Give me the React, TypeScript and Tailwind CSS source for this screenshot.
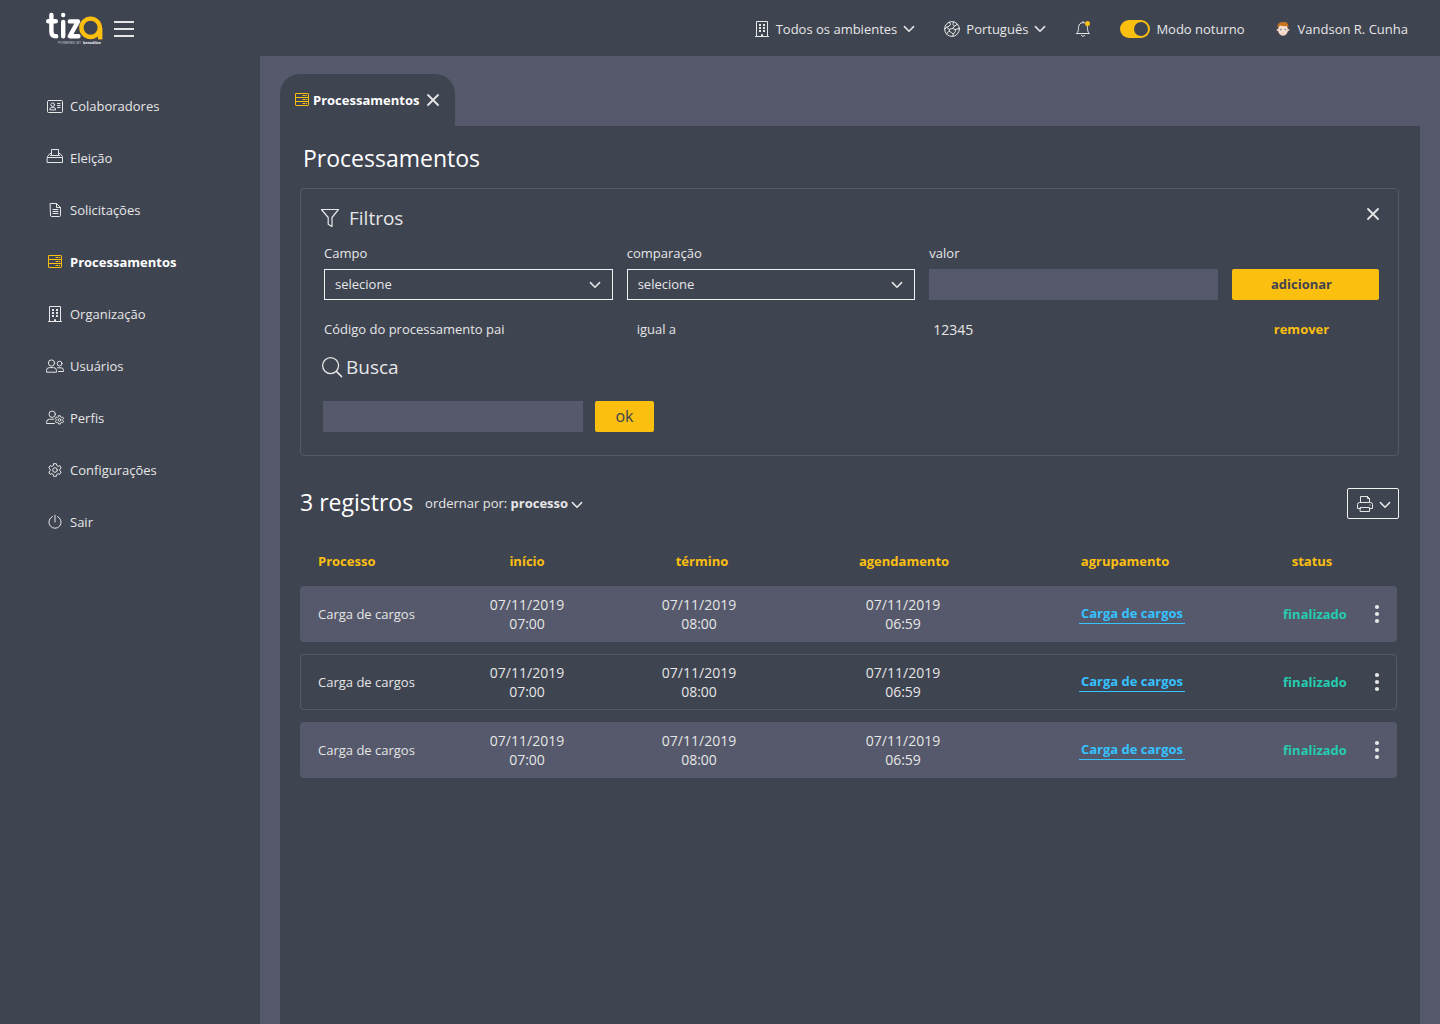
import type { ReactNode } from "react";

type IconProps = { className?: string };

function Svg({ w, h, className = "", children }: { w: number; h: number; className?: string; children: ReactNode }) {
  return (
    <svg
      width={w}
      height={h}
      viewBox={`0 0 ${w} ${h}`}
      fill="none"
      stroke="currentColor"
      strokeWidth="1"
      strokeLinecap="round"
      strokeLinejoin="round"
      aria-hidden="true"
      className={`shrink-0 ${className}`}
    >
      {children}
    </svg>
  );
}

function Logo() {
  return (
    <svg width="58" height="34" viewBox="0 0 58 34" role="img" aria-label="tiza, powered by bencalize" className="shrink-0">
      <g fill="none" stroke="#ffffff" strokeWidth="4.4" strokeLinecap="round" strokeLinejoin="round">
        <path d="M6.4 3V19.5Q6.4 24.3 11.2 24.3M3.2 9.2H10.8" />
        <path d="M18.2 10V24.3M18.2 3V3.1" />
        <path d="M24.8 9.4H33L24.8 24.2H33.4" />
      </g>
      <circle cx="45.6" cy="15.8" r="9.2" fill="#3f4451" stroke="#fbbf10" strokeWidth="4.4" />
      <path d="M55.2 15.8V27.4" stroke="#fbbf10" strokeWidth="4.4" fill="none" />
      <text x="36" y="31.6" textAnchor="end" fontSize="3.4" fill="#c9cbd1" fontFamily="Liberation Sans">POWERED BY</text>
      <text x="38" y="31.6" fontSize="4" fontWeight="700" fill="#ffffff" fontFamily="Liberation Sans">bencàlize</text>
    </svg>
  );
}

const Chevron = ({ className }: IconProps) => (
  <Svg w={12} h={8} className={className}>
    <path d="M1.4 1.6L6 6.2L10.6 1.6" strokeWidth="1.5" />
  </Svg>
);

const Close = ({ className }: IconProps) => (
  <Svg w={14} h={14} className={className}>
    <path d="M2 2L12 12M12 2L2 12" strokeWidth="1.8" />
  </Svg>
);

const Building = () => (
  <Svg w={16} h={16}>
    <path d="M2.5 15V.5H13.5V15M1.5 15.5H14.5M7.5 15V13.5H8.5V15" strokeLinecap="square" />
    <path d="M5 4H7M9 4H11M5 7H7M9 7H11M5 10H7M9 10H11" strokeWidth="2" strokeLinecap="butt" />
  </Svg>
);

const Globe = () => (
  <Svg w={16} h={16}>
    <circle cx="8" cy="8" r="7.4" />
    <path d="M5.2 1.3L6.6 3.2L5 5.3L2.4 6.2L1 8.2M2.4 6.2L5.4 8.4L5.2 10.2L3.4 11.6L2.8 13M9.6.9L8.8 3.4L10.4 5.2L8.6 7.4L5.4 8.4M10.4 5.2L13.4 3.2M8.6 7.4L11.2 8.6L11.4 10.8L9.2 13L9 15.2M11.2 8.6L15.2 7.4M5.2 10.2L7.4 11.6L9.2 13" />
  </Svg>
);

const Bell = () => (
  <Svg w={16} h={18}>
    <path d="M1.5 13.5H14.5C12.8 12.2 12.6 10.6 12.5 7.6C12.4 4.6 10.7 2.6 8 2.6S3.6 4.6 3.5 7.6C3.4 10.6 3.2 12.2 1.5 13.5ZM6.4 15.6Q8 17.4 9.6 15.6M8 2.4V1.4" />
    <circle cx="12.5" cy="3.4" r="2.5" fill="#fbbf10" stroke="none" />
  </Svg>
);

const Avatar = () => (
  <Svg w={14} h={16}>
    <g stroke="none">
      <ellipse cx="7" cy="8.8" rx="5" ry="5.9" fill="#f7dfcf" />
      <circle cx="1.6" cy="9" r="1.1" fill="#efc4ab" />
      <circle cx="12.4" cy="9" r="1.1" fill="#efc4ab" />
      <path d="M1.8 7.4C.8 3.2 2.8.8 6.4 1.2C9.6.2 13.2 1.6 12.2 7.4L11.2 5C8.6 5.4 6 5 4.2 4.4L2.6 5.6Z" fill="#c8741f" />
      <circle cx="4.8" cy="8.6" r=".8" fill="#5d7f9b" />
      <circle cx="9.2" cy="8.6" r=".8" fill="#5d7f9b" />
      <path d="M5.8 12H8.2L7 12.8Z" fill="#d97f72" />
    </g>
  </Svg>
);

const Card = () => (
  <Svg w={18} h={16}>
    <rect x="1.5" y="2.5" width="15" height="12" rx="1" />
    <circle cx="6.7" cy="6.7" r="1.8" />
    <path d="M3.8 11.5Q3.8 9.4 5.6 9.4H7.8Q9.6 9.4 9.6 11.5ZM11.5 5.5H14M11.5 7.5H14M11.5 9.5H14" />
  </Svg>
);

const Ballot = () => (
  <Svg w={18} h={16} className="-translate-y-0.5">
    <path d="M1.5 9.5H16.5V14.5H1.5ZM1.5 9.5V8.5L4 5.5H5M16.5 9.5V8.5L14 5.5H13M4.5 7.5H13.5M5.5 7V1.5H12.5V7" />
  </Svg>
);

const Doc = () => (
  <Svg w={16} h={16}>
    <path d="M3.5 1.5H9.5L13.5 5.5V13.5Q13.5 14.5 12.5 14.5H4.5Q3.5 14.5 3.5 13.5ZM9.5 1.5V5.5H13.5M6 7.5H11M6 9.5H11M6 11.5H11" />
  </Svg>
);

const Server = () => (
  <Svg w={16} h={14} className="text-[#fbbf10]">
    <rect x="1.5" y=".5" width="13" height="12" rx=".6" />
    <path d="M1.5 4.5H14.5M1.5 8.5H14.5M9 2.5H11M12.4 2.5H12.6M9 6.5H11M12.4 6.5H12.6M9 10.5H11M12.4 10.5H12.6" />
  </Svg>
);

const Users = () => (
  <Svg w={20} h={16}>
    <circle cx="6.5" cy="5" r="3.1" />
    <circle cx="14.6" cy="5.6" r="2.4" />
    <path d="M1.5 13.8V12.6Q1.5 9.6 4.4 9.6H8.6Q11.5 9.6 11.5 12.6V13.8ZM13.5 13.5H18.5V12.4Q18.5 9.8 16 9.8H12.6" />
  </Svg>
);

const gearPath =
  "M6.7 1.7H9.3L9.7 3.5L11.1 4.3L12.9 3.7L14.2 6L12.8 7.2V8.8L14.2 10L12.9 12.3L11.1 11.7L9.7 12.5L9.3 14.3H6.7L6.3 12.5L4.9 11.7L3.1 12.3L1.8 10L3.2 8.8V7.2L1.8 6L3.1 3.7L4.9 4.3L6.3 3.5Z";

const UserGear = () => (
  <Svg w={20} h={16}>
    <circle cx="7.2" cy="4.2" r="3.2" />
    <path d="M9.4 13.5H1.5V12.4Q1.5 9.2 4.6 9.2H8.8" />
    <g transform="translate(9.2 4.6) scale(.66)" strokeWidth="1.5">
      <path d={gearPath} />
      <circle cx="8" cy="8" r="2" />
    </g>
  </Svg>
);

const Gear = () => (
  <Svg w={16} h={16}>
    <path d={gearPath} />
    <circle cx="8" cy="8" r="2.3" />
  </Svg>
);

const Power = () => (
  <Svg w={16} h={16}>
    <path d="M5.4 2.6A6.1 6.1 0 1 0 10.6 2.6M8 1.2V8" />
  </Svg>
);

const Funnel = () => (
  <Svg w={20} h={20}>
    <path d="M1.5 1.5H18.5L12 9.5V18.5L8.2 16.2V9.5Z" strokeWidth="1.2" />
  </Svg>
);

const Search = () => (
  <Svg w={22} h={22}>
    <circle cx="9.6" cy="9.6" r="8" strokeWidth="1.3" />
    <path d="M15.4 15.4L20.6 20.6" strokeWidth="1.5" />
  </Svg>
);

const Printer = () => (
  <Svg w={16} h={16}>
    <path d="M3.5 6.5V.5H10.5L12.5 2.5V6.5M10.5.5V2.5H12.5M3.5 12.5H.5V8.5Q.5 6.5 2.5 6.5H13.5Q15.5 6.5 15.5 8.5V12.5H12.5M3.5 11.5H12.5V15.5H3.5ZM12.8 9H13" />
  </Svg>
);

const Dots = () => (
  <Svg w={6} h={20}>
    <g fill="currentColor" stroke="none">
      <circle cx="3" cy="3" r="2.1" />
      <circle cx="3" cy="10" r="2.1" />
      <circle cx="3" cy="17" r="2.1" />
    </g>
  </Svg>
);

const menu = [
  { label: "Colaboradores", icon: <Card /> },
  { label: "Eleição", icon: <Ballot /> },
  { label: "Solicitações", icon: <Doc /> },
  { label: "Processamentos", icon: <Server />, active: true },
  { label: "Organização", icon: <Building /> },
  { label: "Usuários", icon: <Users /> },
  { label: "Perfis", icon: <UserGear /> },
  { label: "Configurações", icon: <Gear /> },
  { label: "Sair", icon: <Power /> },
];

const rows = [1, 2, 3].map((id) => ({
  id,
  process: "Carga de cargos",
  start: ["07/11/2019", "07:00"],
  end: ["07/11/2019", "08:00"],
  schedule: ["07/11/2019", "06:59"],
  group: "Carga de cargos",
  status: "finalizado",
}));

function Header() {
  return (
    <header className="flex h-14 items-center justify-between bg-[#3f4451] pl-[45px] pr-8 pt-0.5">
      <div className="flex items-center gap-[11px]">
        <Logo />
        <button type="button" aria-label="Menu" className="flex flex-col gap-[5px]">
          <span className="h-0.5 w-5 bg-[#e6e6e6]" />
          <span className="h-0.5 w-5 bg-[#e6e6e6]" />
          <span className="h-0.5 w-5 bg-[#e6e6e6]" />
        </button>
      </div>
      <div className="flex items-center gap-[29px]">
        <button type="button" className="flex items-center gap-1.5">
          <Building />
          <span>Todos os ambientes</span>
          <Chevron />
        </button>
        <button type="button" className="flex items-center gap-1.5">
          <Globe />
          <span>Português</span>
          <Chevron />
        </button>
        <button type="button" aria-label="Notificações">
          <Bell />
        </button>
        <label className="flex items-center gap-1.5">
          <input
            type="checkbox"
            defaultChecked
            className="flex h-[18px] w-[30px] appearance-none items-center rounded-full bg-[#fbbf10] px-0.5 before:block before:size-3.5 before:rounded-full before:bg-[#3f4451] checked:justify-end"
          />
          <span>Modo noturno</span>
        </label>
        <button type="button" className="ml-0.5 flex items-center gap-2">
          <Avatar />
          <span>Vandson R. Cunha</span>
        </button>
      </div>
    </header>
  );
}

function Sidebar() {
  return (
    <nav className="w-[260px] shrink-0 bg-[#3f4451] pt-6">
      <ul>
        {menu.map((m) => (
          <li key={m.label}>
            <a href="#" className={m.active ? "flex h-[52px] items-center gap-[5px] pl-[45px] font-bold text-white" : "flex h-[52px] items-center gap-[5px] pl-[45px]"}>
              <span className="flex w-5 justify-center">{m.icon}</span>
              {m.label}
            </a>
          </li>
        ))}
      </ul>
    </nav>
  );
}

function SelectField({ id, label }: { id: string; label: string }) {
  return (
    <div>
      <label htmlFor={id} className="block">{label}</label>
      <div className="mt-1.5 grid items-center">
        <select id={id} className="col-start-1 row-start-1 h-[31px] w-full appearance-none border border-[#f2f2f2] bg-transparent px-2.5">
          <option>selecione</option>
        </select>
        <Chevron className="pointer-events-none col-start-1 row-start-1 mr-3 justify-self-end" />
      </div>
    </div>
  );
}

function Filters() {
  return (
    <section className="rounded border border-[#55596b] pb-[23px] pl-[23px] pr-[19px] pt-[15px]">
      <div className="flex justify-between">
        <h2 className="-ml-1 flex items-center gap-[9px] text-[19px] leading-7">
          <Funnel />
          Filtros
        </h2>
        <button type="button" aria-label="Fechar filtros" className="-mr-px mt-[3px] self-start">
          <Close />
        </button>
      </div>
      <div className="mt-3 grid grid-cols-[1fr_1fr_1fr_147px] items-end gap-x-3.5">
        <SelectField id="campo" label="Campo" />
        <SelectField id="comparacao" label="comparação" />
        <div>
          <label htmlFor="valor" className="block">valor</label>
          <input id="valor" type="text" className="mt-1.5 block h-[31px] w-full bg-[#55596b] px-2.5" />
        </div>
        <button type="button" className="h-[31px] rounded-xs bg-[#fbbf10] pr-2 font-bold text-[#3f4451]">adicionar</button>
        <p className="mt-5">Código do processamento pai</p>
        <p className="mt-5 pl-2.5">igual a</p>
        <p className="mt-5 pl-1 text-sm leading-[19px]">12345</p>
        <button type="button" className="mt-5 justify-self-center pr-2 font-bold text-[#fbbf10]">remover</button>
      </div>
      <h2 className="-ml-[3px] mt-3.5 flex items-center gap-[3px] text-[19px] leading-7">
        <Search />
        <label htmlFor="busca">Busca</label>
      </h2>
      <div className="mt-5 flex gap-3">
        <input id="busca" type="text" className="-ml-px h-[31px] w-[260px] bg-[#55596b] px-2.5" />
        <button type="button" className="h-[31px] w-[59px] rounded-xs bg-[#fbbf10] pb-0.5 text-base text-[#3f4451]">ok</button>
      </div>
    </section>
  );
}

function Stamp({ value }: { value: string[] }) {
  return (
    <>
      <span className="block">{value[0]}</span>
      <span className="block">{value[1]}</span>
    </>
  );
}

function Records() {
  return (
    <section className="mt-8">
      <div className="flex items-center justify-between">
        <div className="flex items-center gap-3">
          <h2 className="pb-[3px] text-[23px] leading-7 text-white">3 registros</h2>
          <button type="button" className="flex items-center gap-[3px]">
            <span>ordernar por: <b className="font-bold">processo</b></span>
            <Chevron className="mt-0.5" />
          </button>
        </div>
        <button type="button" aria-label="Imprimir" className="flex h-[31px] w-[52px] items-center justify-center gap-1.5 rounded-xs border border-[#f2f2f2] pl-0.5">
          <Printer />
          <Chevron className="mt-0.5" />
        </button>
      </div>
      <div className="mr-0.5 mt-[17px]">
        <table className="w-full table-fixed border-separate border-spacing-x-0 border-spacing-y-3 text-center">
          <colgroup>
            <col className="w-[141px]" />
            <col className="w-[172px]" />
            <col className="w-[172px]" />
            <col className="w-[236px]" />
            <col className="w-[222px]" />
            <col className="w-[114px]" />
            <col className="w-[40px]" />
          </colgroup>
          <thead>
            <tr className="h-[26px] text-[#fbbf10]">
              <th scope="col" className="p-0 pl-[18px] text-left font-bold">Processo</th>
              <th scope="col" className="p-0 font-bold">início</th>
              <th scope="col" className="p-0 pl-1.5 font-bold">término</th>
              <th scope="col" className="p-0 pl-0.5 font-bold">agendamento</th>
              <th scope="col" className="p-0 pr-3.5 font-bold">agrupamento</th>
              <th scope="col" className="p-0 pl-6 font-bold">status</th>
              <td />
            </tr>
          </thead>
          <tbody>
            {rows.map((r) => (
              <tr key={r.id} className="h-14 *:border-y *:border-[#55596b] *:p-0 odd:*:bg-[#55596b]">
                <td className="rounded-l border-l text-left"><span className="pl-[17px]">{r.process}</span></td>
                <td className="text-sm leading-[19px]"><Stamp value={r.start} /></td>
                <td className="text-sm leading-[19px]"><Stamp value={r.end} /></td>
                <td className="text-sm leading-[19px]"><Stamp value={r.schedule} /></td>
                <td>
                  <a href="#" className="inline-block border-b border-[#36c2ff] px-0.5 font-bold text-[#36c2ff]">{r.group}</a>
                </td>
                <td className="text-[#24ccb0]"><span className="pl-[30px] font-bold">{r.status}</span></td>
                <td className="rounded-r border-r">
                  <button type="button" aria-label="Mais opções" className="align-middle">
                    <Dots />
                  </button>
                </td>
              </tr>
            ))}
          </tbody>
        </table>
      </div>
    </section>
  );
}

export default function App() {
  return (
    <div className="flex min-h-screen flex-col bg-[#55596b] font-['Open_Sans',sans-serif] text-[13px] leading-[19px] text-[#e6e6e6]">
      <Header />
      <div className="flex flex-1">
        <Sidebar />
        <main className="flex min-w-0 flex-1 flex-col px-5 pt-[18px]">
          <div className="flex h-[52px] items-center gap-[7px] self-start rounded-t-[20px] bg-[#3f4451] pl-3.5 pr-[15px]">
            <a href="#" className="flex items-center gap-[3px] font-bold text-white">
              <Server />
              Processamentos
            </a>
            <button type="button" aria-label="Fechar aba">
              <Close />
            </button>
          </div>
          <div className="flex-1 bg-[#3f4451] pb-6 pl-5 pr-[21px] pt-4">
            <h1 className="mb-3.5 pl-[3px] text-[23px] leading-8 text-white">Processamentos</h1>
            <Filters />
            <Records />
          </div>
        </main>
      </div>
    </div>
  );
}
